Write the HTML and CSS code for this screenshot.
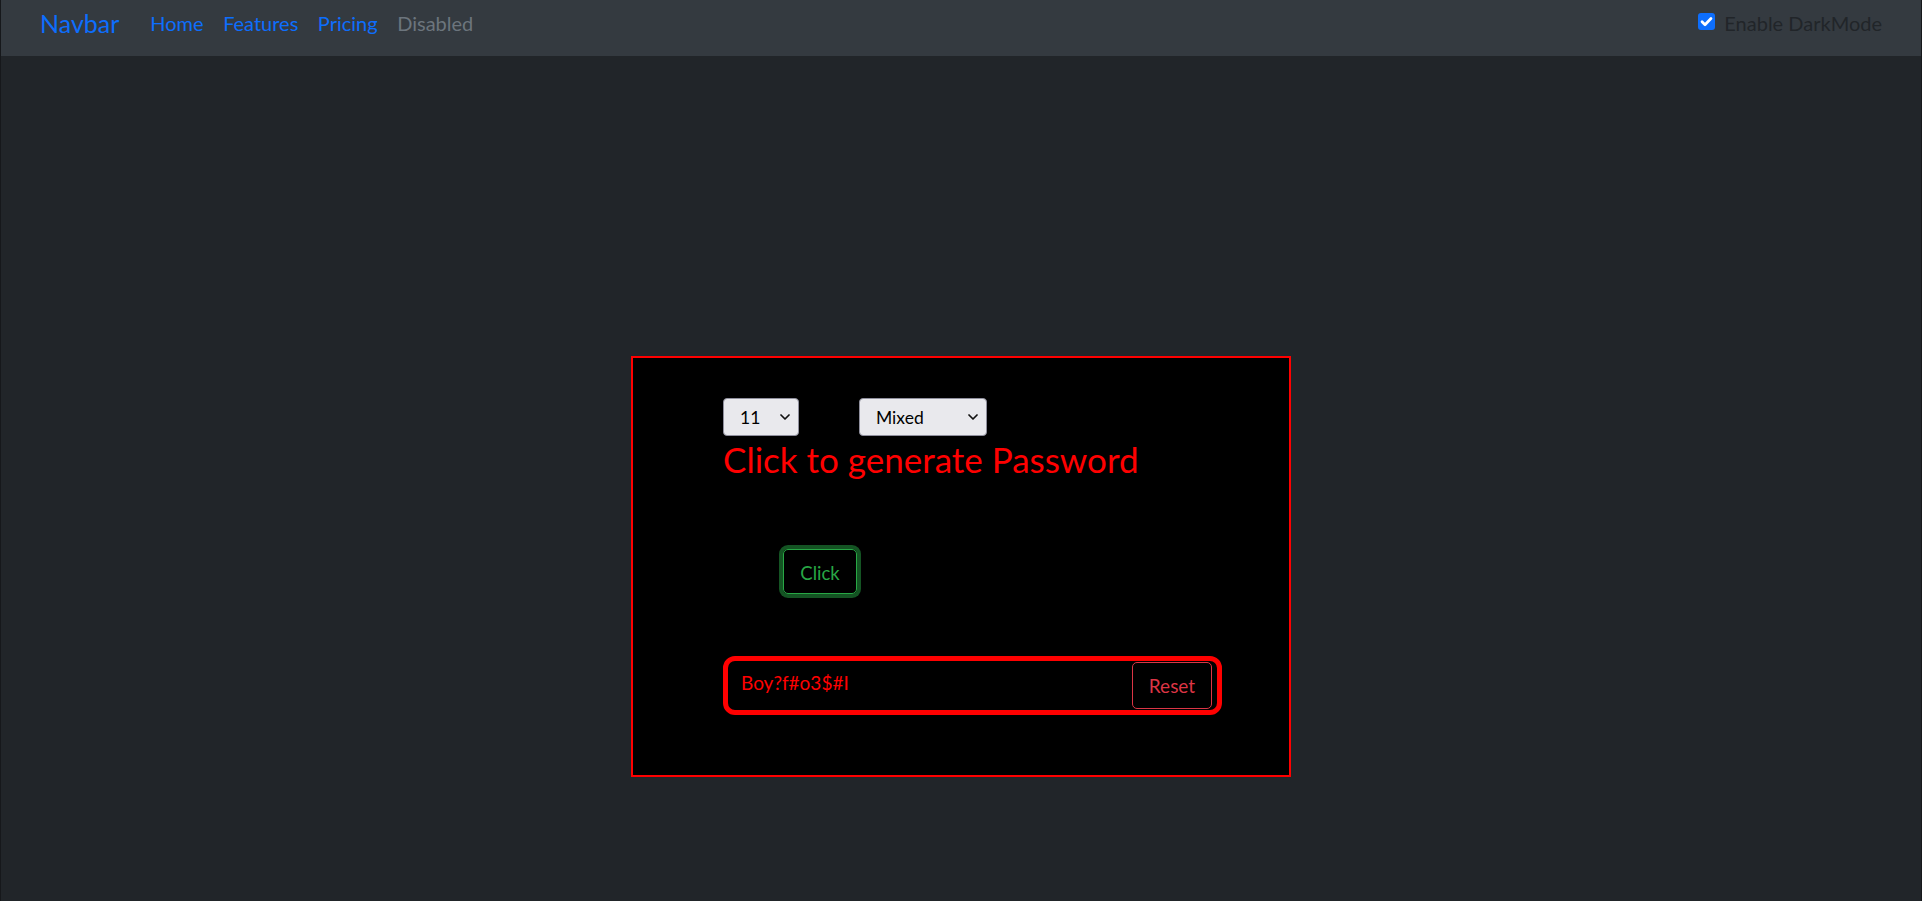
FILE: index.html
```html
<!DOCTYPE html>
<html lang="en">
<head>
<meta charset="utf-8">
<title>Password Generator</title>
<link rel="stylesheet" href="styles.css">
</head>
<body>
<div class="page">
  <nav class="navbar">
    <a class="brand" href="#">Navbar</a>
    <ul class="nav-links">
      <li><a class="nav-link" href="#">Home</a></li>
      <li><a class="nav-link" href="#">Features</a></li>
      <li><a class="nav-link" href="#">Pricing</a></li>
      <li><span class="nav-link disabled">Disabled</span></li>
    </ul>
    <label class="dark-toggle">
      <span class="check">
        <svg viewBox="0 0 16 16" width="17" height="17" aria-hidden="true"><path d="M3.8 8.2l2.8 2.8L12.2 5.2" fill="none" stroke="#fff" stroke-width="2.6" stroke-linecap="round" stroke-linejoin="round"/></svg>
      </span>
      <span class="toggle-text">Enable DarkMode</span>
    </label>
  </nav>

  <main class="main">
    <section class="generator">
      <div class="options">
        <div class="select-wrap select-len">
          <select class="select"><option>11</option></select>
          <svg class="chev" viewBox="0 0 10 6" width="10" height="6" aria-hidden="true"><path d="M1 1l4 4 4-4" fill="none" stroke="#111" stroke-width="1.7" stroke-linecap="round" stroke-linejoin="round"/></svg>
        </div>
        <div class="select-wrap select-type">
          <select class="select"><option>Mixed</option></select>
          <svg class="chev" viewBox="0 0 10 6" width="10" height="6" aria-hidden="true"><path d="M1 1l4 4 4-4" fill="none" stroke="#111" stroke-width="1.7" stroke-linecap="round" stroke-linejoin="round"/></svg>
        </div>
      </div>
      <h2 class="title">Click to generate Password</h2>
      <button class="btn-click" type="button">Click</button>
      <div class="result">
        <span class="password">Boy?f#o3$#I</span>
        <button class="btn-reset" type="button">Reset</button>
      </div>
    </section>
  </main>
</div>
</body>
</html>
```

FILE: styles.css
```css
* { box-sizing: border-box; }

html, body {
  margin: 0;
  padding: 0;
  background: #212529;
  font-family: "Lato", "Noto Sans", "Liberation Sans", sans-serif;
}

.page {
  min-height: 901px;
  background: #212529;
  border-left: 1px solid #16181b;
  border-right: 1px solid #16181b;
}

.navbar {
  height: 56px;
  background: #343a40;
  display: flex;
  align-items: center;
  padding: 0 39px 10px 39px;
}

.brand {
  font-size: 25px;
  color: #0d6efd;
  text-decoration: none;
  margin-right: 31px;
  line-height: 1.2;
}

.nav-links {
  list-style: none;
  margin: 0;
  padding: 0;
  display: flex;
  gap: 19.5px;
}

.nav-link {
  font-size: 20px;
  color: #0d6efd;
  text-decoration: none;
  line-height: 1.2;
}

.nav-link.disabled { color: #6c757d; }

.dark-toggle {
  margin-left: auto;
  display: flex;
  align-items: center;
  gap: 9px;
  font-size: 20px;
  line-height: 1.2;
  color: #212529;
}

.check {
  width: 17px;
  height: 17px;
  background: #0d6efd;
  border-radius: 3px;
  display: flex;
  margin-top: -3px;
}

.main {
  padding-top: 300px;
  display: flex;
  justify-content: center;
}

.generator {
  width: 660px;
  background: #000;
  border: 2px solid #ff0000;
  padding: 40px 60px 60px 90px;
}

.options {
  display: flex;
  gap: 60px;
}

.select-wrap { position: relative; }

.select {
  appearance: none;
  -webkit-appearance: none;
  height: 38px;
  background: #e9e9ed;
  border: 1px solid #8f8f9d;
  border-radius: 4px;
  font-family: inherit;
  font-size: 17.5px;
  color: #000;
  padding: 0 0 0 16px;
  margin: 0;
}

.select-len .select { width: 76px; }
.select-type .select { width: 128px; }

.chev {
  position: absolute;
  right: 9px;
  top: 16px;
  pointer-events: none;
}

.title {
  margin: 2px 0 0 0;
  font-size: 35px;
  font-weight: 400;
  line-height: 1.2;
  color: #ff0000;
}

.btn-click {
  display: block;
  margin: 69px 0 0 60px;
  width: 74px;
  height: 45px;
  background: transparent;
  border: 1px solid #28a745;
  border-radius: 5px;
  box-shadow: 0 0 0 4px rgba(40, 167, 69, 0.5);
  color: #28a745;
  font-family: inherit;
  font-size: 18.5px;
  padding: 2px 0 0 0;
}

.result {
  margin-top: 62px;
  width: 499px;
  height: 59px;
  border: 5px solid #ff0000;
  border-radius: 12px;
  display: flex;
  justify-content: space-between;
  align-items: flex-start;
  padding: 1px 5px 1px 13px;
}

.password {
  color: #ff0000;
  font-size: 19px;
  line-height: 27px;
  padding-top: 7px;
}

.btn-reset {
  width: 80px;
  height: 47px;
  background: transparent;
  border: 1px solid #dc3545;
  border-radius: 5px;
  color: #dc3545;
  font-family: inherit;
  font-size: 19px;
  line-height: 30px;
  padding: 0;
}
```
